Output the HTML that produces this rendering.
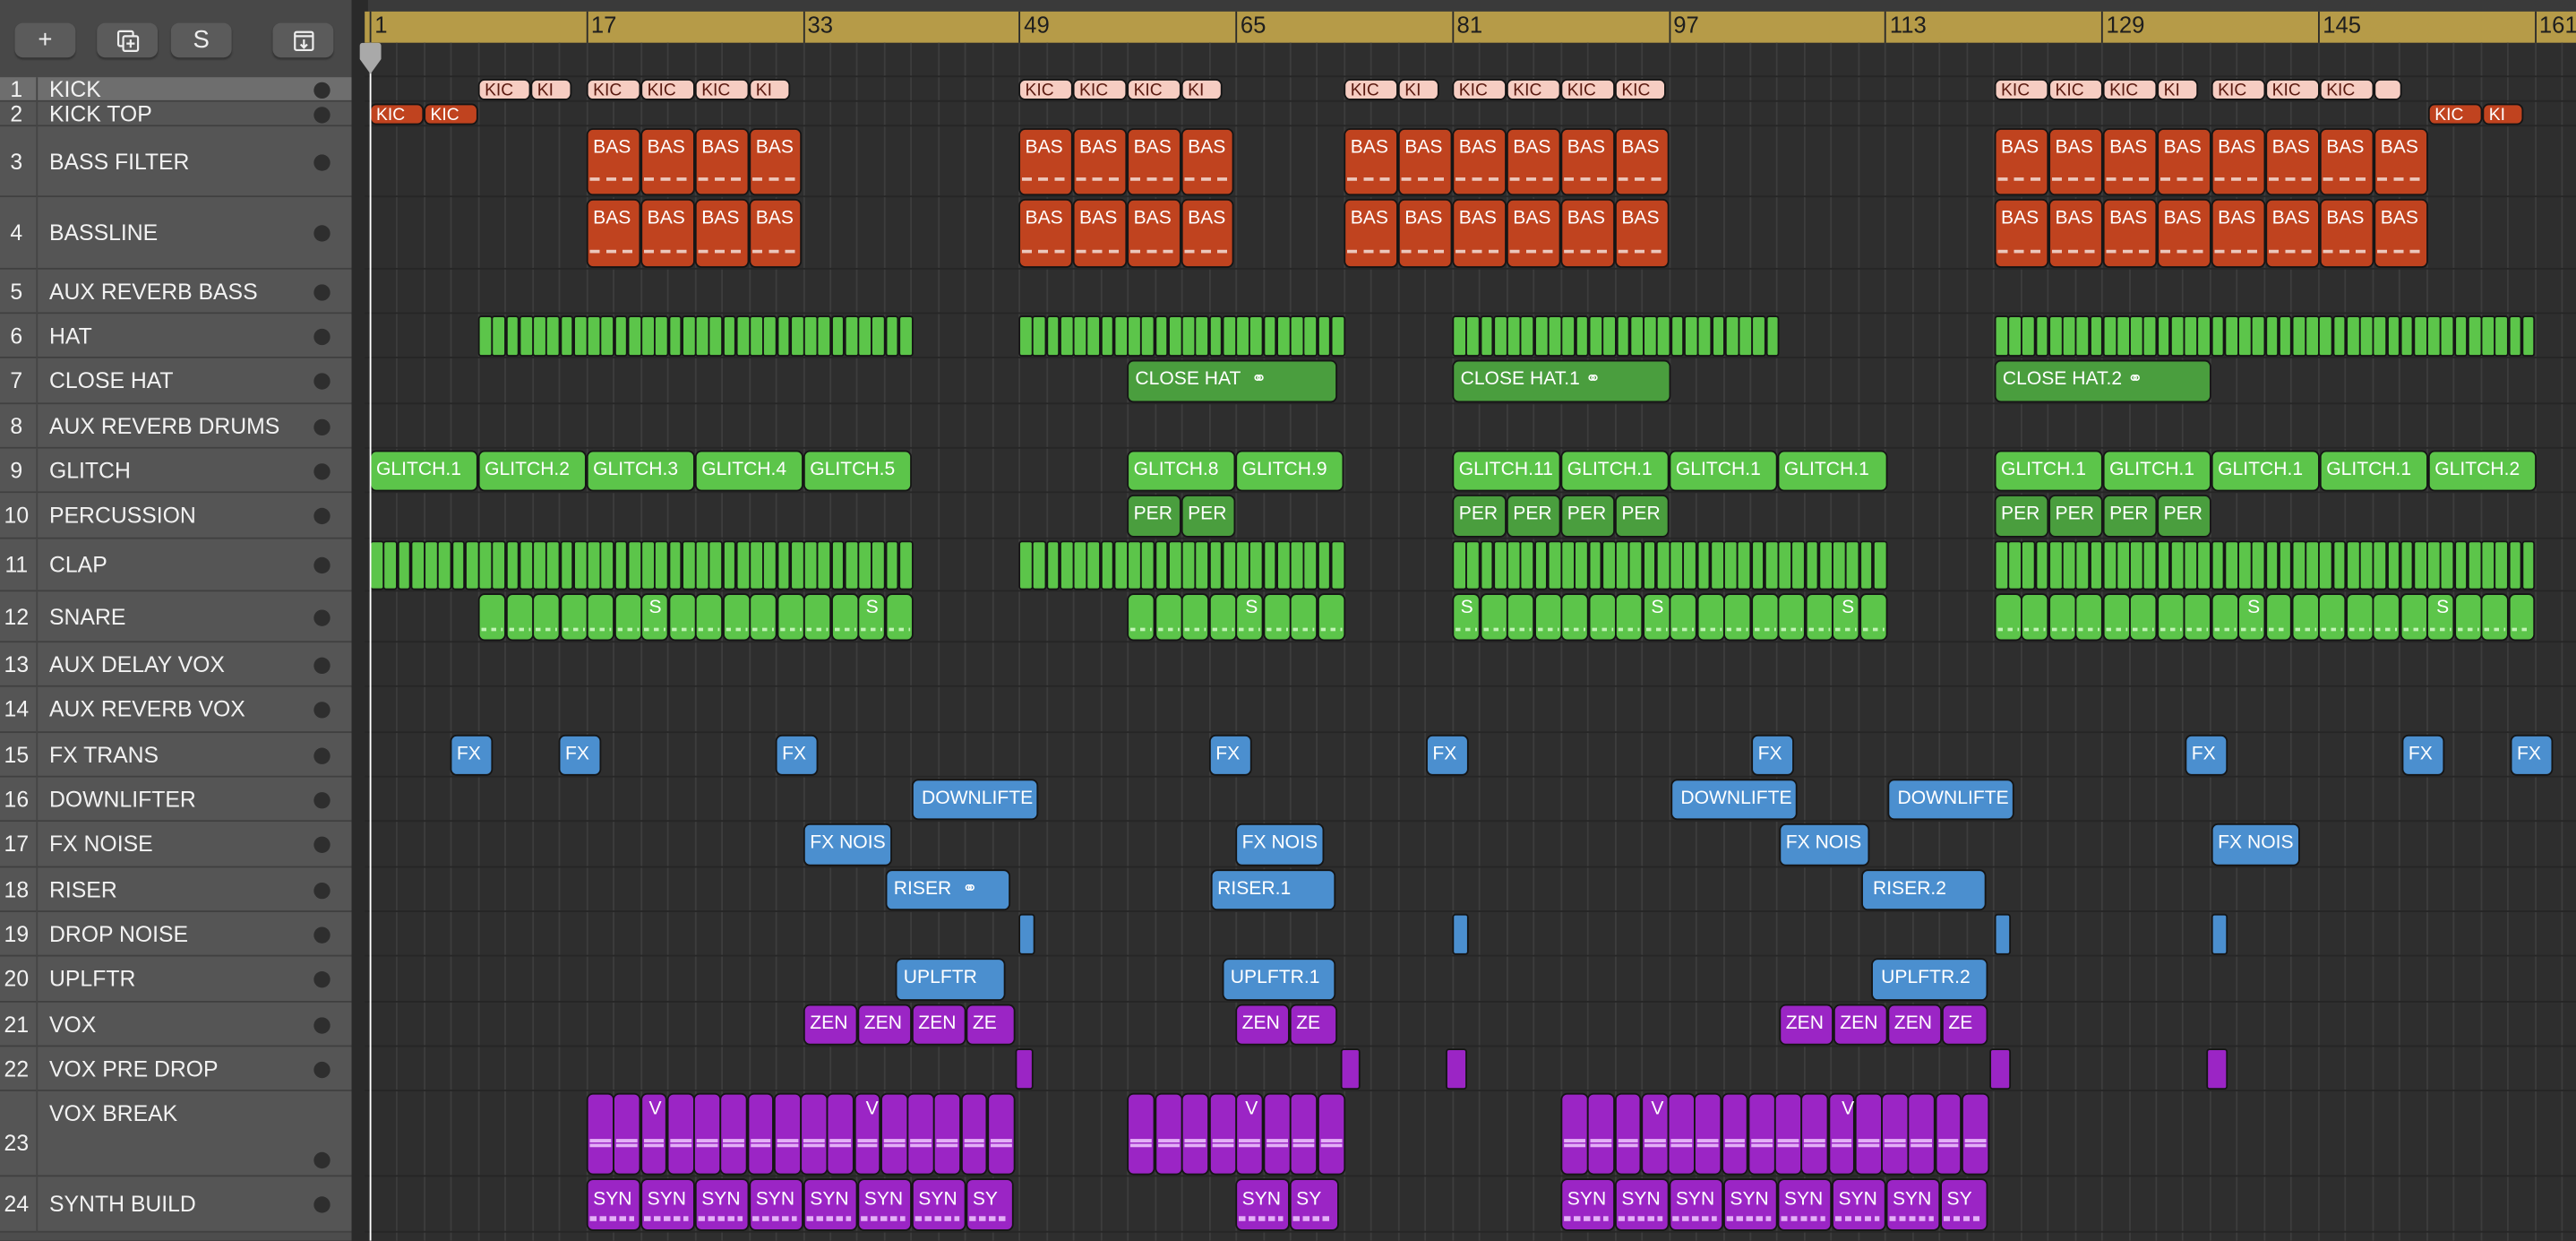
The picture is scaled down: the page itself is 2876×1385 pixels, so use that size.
<!DOCTYPE html>
<html><head><meta charset="utf-8"><style>
html,body{margin:0;padding:0;background:#2e2e2e;overflow:hidden;width:2876px;height:1384px}
#s{position:absolute;left:0;top:0;width:1568px;height:755px;transform:scale(1.83418);transform-origin:0 0;background:#2e2e2e;font-family:"Liberation Sans",sans-serif;overflow:hidden}
.a{position:absolute}
#lp{left:0;top:0;width:214px;height:755px;background:#4d4d4d}
.btn{position:absolute;top:14px;height:21px;width:37px;background:#5b5b5b;border-radius:5px;box-shadow:0 1px 1px #333;color:#eee;text-align:center;font-size:15px;line-height:21px}
.tr{position:absolute;left:0;width:214px;background:#555;border-bottom:1px solid #404040;box-sizing:border-box;color:#f2f2f2;font-size:13.5px}
.tr .n{position:absolute;left:0;width:20px;text-align:center}
.tr .t{position:absolute;left:30px}
.tr .d{position:absolute;left:191px;width:10px;height:10px;border-radius:50%;background:#2e2e2e}
.c{position:absolute;top:1px;bottom:1px;border:1px solid #151515;border-radius:4px;box-sizing:border-box;color:#fff;font-size:11.5px;padding-left:3px;white-space:nowrap;overflow:hidden}
.k{background:#f6cdc2;color:#5a1a10}
.r{background:#c0431f}
.g{background:#5cc54a}
.dg{background:#4a9e3e}
.b{background:#4b8fcf}
.p{background:#9b25c5}
.m::after{content:"";position:absolute;left:1px;right:2px;bottom:8px;height:2px;background:repeating-linear-gradient(90deg,rgba(255,255,255,.7) 0 6px,transparent 6px 10px)}
.m2::after{content:"";position:absolute;left:1px;right:1px;bottom:16px;height:5px;background:linear-gradient(rgba(240,200,255,.85) 0 2px,transparent 2px 3px,rgba(240,200,255,.85) 3px 5px)}
.m3::after{content:"";position:absolute;left:1px;right:1px;bottom:5px;height:2px;background:repeating-linear-gradient(90deg,rgba(220,255,210,.8) 0 3px,transparent 3px 6px)}
.m4::after{content:"";position:absolute;left:1px;right:3px;bottom:5px;height:3px;background:repeating-linear-gradient(90deg,rgba(240,200,255,.85) 0 4px,transparent 4px 6px)}
</style></head><body><div id="s">
<div class="a" style="left:0;top:0;width:1568px;height:7px;background:#3a3a3a"></div>
<div class="a" style="left:214px;top:0;width:10px;height:755px;background:#2a2a2a"></div>
<div class="a" id="ruler" style="left:222px;top:7px;width:1346px;height:19px;background:#b69b48;font-size:14px;color:#1e1e1e"></div>
<div id="grid"></div>
<div id="lp">
<div class="a" style="left:0;top:0;width:214px;height:47px;background:#484848"></div>
<div class="btn" style="left:9px">+</div>
<div class="btn" style="left:59px"><svg width="14" height="14" viewBox="0 0 14 14" style="margin-top:4px" fill="none" stroke="#eee" stroke-width="1.2"><rect x="1" y="1" width="9" height="9" rx="1"/><rect x="4" y="4" width="9" height="9" rx="1" fill="#5b5b5b"/><path d="M8.5 6v5M6 8.5h5"/></svg></div>
<div class="btn" style="left:104px">S</div>
<div class="btn" style="left:166px"><svg width="14" height="14" viewBox="0 0 14 14" style="margin-top:4px" fill="none" stroke="#eee" stroke-width="1.2"><rect x="1.5" y="1.5" width="11" height="11" rx="1"/><path d="M1.5 4h11M7 6v5M5 9l2 2 2-2"/></svg></div>
<div id="tracks"></div>
</div>
<script>
var tops=[47,62,77,120,164,191,218,246,273,300,328,360,391,418,446,473,500,528,555,582,610,637,664,716,750];
var names=["KICK","KICK TOP","BASS FILTER","BASSLINE","AUX REVERB BASS","HAT","CLOSE HAT","AUX REVERB DRUMS","GLITCH","PERCUSSION","CLAP","SNARE","AUX DELAY VOX","AUX REVERB VOX","FX TRANS","DOWNLIFTER","FX NOISE","RISER","DROP NOISE","UPLFTR","VOX","VOX PRE DROP","VOX BREAK","SYNTH BUILD"];
var g=document.getElementById('grid'),h='';
for(var x=225;x<1568;x+=16.47){h+='<div class="a" style="left:'+x+'px;top:26px;width:1px;height:729px;background:#3d3d3d"></div>';}
for(var i=0;i<25;i++){h+='<div class="a" style="left:222px;top:'+(tops[i]-1)+'px;width:1346px;height:1px;background:#262626"></div>';}
h+='<div class="a" style="left:225px;top:26px;width:1px;height:729px;background:#fff;z-index:5"></div>';
h+='<svg class="a" style="left:218px;top:26px;z-index:6" width="15" height="20"><path d="M1 2Q1 0 3 0H12Q14 0 14 2V10L7.5 19L1 10Z" fill="#a9a9a9"/></svg>';
g.innerHTML=h;
var r=document.getElementById('ruler'),rh='';
[1,17,33,49,65,81,97,113,129,145,161].forEach(function(b){var x=3+(b-1)*8.235;rh+='<div class="a" style="left:'+x+'px;top:0;height:19px;border-left:1px solid #2a2a2a;padding-left:2px;line-height:17px">'+b+'</div>';});
r.innerHTML=rh;
var tt='';
for(var i=0;i<24;i++){var t=tops[i],hh=tops[i+1]-t,cy=hh/2;var sel=i==0;
var ly=(i==22)?6:cy-8;
tt+='<div class="tr" style="top:'+t+'px;height:'+hh+'px;'+(sel?'background:#6e6e6e':'')+'"><span class="n" style="top:'+(i==22?cy-2:cy-8)+'px">'+(i+1)+'</span><span class="a" style="left:22px;top:0;width:1px;height:'+hh+'px;background:#444"></span><span class="t" style="top:'+ly+'px">'+names[i]+'</span><span class="d" style="top:'+(i==22?hh-15:cy-5)+'px"></span></div>';}
document.getElementById('tracks').innerHTML=tt;
function seg(row,cls,ranges,n,rad){var t=tops[row-1],hh=tops[row]-t,s='';
ranges.forEach(function(rg){var w=(rg[1]-rg[0])/Math.round((rg[1]-rg[0])/n);for(var x=rg[0];x<rg[1]-2;x+=w){s+='<div class="c '+cls+'" style="left:'+x+'px;top:'+(t+1)+'px;height:'+(hh-2)+'px;width:'+(w+0.5)+'px;border-radius:'+rad+'px"></div>';}});
var d=document.createElement('div');d.innerHTML=s;document.getElementById('s').appendChild(d);}
seg(6,'g',[[291,555],[620,818],[884,1083],[1214,1543]],8.24,2);
seg(11,'g',[[225,555],[620,818],[884,1148],[1214,1543]],8.24,2);
seg(12,'g m3',[[291,555],[686,818],[884,1148],[1214,1543]],16.47,4);
seg(23,'p m2',[[357,617],[686,818],[950,1210]],16.47,4);
seg(19,'b',[[620,629],[884,893],[1214,1223],[1346,1355]],9,2);
seg(22,'p',[[618,628],[816,827],[880,892],[1211,1223],[1343,1355]],11,2);
</script>
<div class="a" style="left:0;top:47px;height:15px;width:1568px">
<div class="c k" style="left:291px;width:32px;font-size:10.5px;line-height:12px">KIC</div><div class="c k" style="left:323px;width:25px;font-size:10.5px;line-height:12px">KI</div>
<div class="c k" style="left:357px;width:33px;font-size:10.5px;line-height:12px">KIC</div><div class="c k" style="left:390px;width:33px;font-size:10.5px;line-height:12px">KIC</div><div class="c k" style="left:423px;width:33px;font-size:10.5px;line-height:12px">KIC</div><div class="c k" style="left:456px;width:25px;font-size:10.5px;line-height:12px">KI</div>
<div class="c k" style="left:620px;width:33px;font-size:10.5px;line-height:12px">KIC</div><div class="c k" style="left:653px;width:33px;font-size:10.5px;line-height:12px">KIC</div><div class="c k" style="left:686px;width:33px;font-size:10.5px;line-height:12px">KIC</div><div class="c k" style="left:719px;width:25px;font-size:10.5px;line-height:12px">KI</div>
<div class="c k" style="left:818px;width:33px;font-size:10.5px;line-height:12px">KIC</div><div class="c k" style="left:851px;width:25px;font-size:10.5px;line-height:12px">KI</div>
<div class="c k" style="left:884px;width:33px;font-size:10.5px;line-height:12px">KIC</div><div class="c k" style="left:917px;width:33px;font-size:10.5px;line-height:12px">KIC</div><div class="c k" style="left:950px;width:33px;font-size:10.5px;line-height:12px">KIC</div><div class="c k" style="left:983px;width:31px;font-size:10.5px;line-height:12px">KIC</div>
<div class="c k" style="left:1214px;width:33px;font-size:10.5px;line-height:12px">KIC</div><div class="c k" style="left:1247px;width:33px;font-size:10.5px;line-height:12px">KIC</div><div class="c k" style="left:1280px;width:33px;font-size:10.5px;line-height:12px">KIC</div><div class="c k" style="left:1313px;width:25px;font-size:10.5px;line-height:12px">KI</div>
<div class="c k" style="left:1346px;width:33px;font-size:10.5px;line-height:12px">KIC</div><div class="c k" style="left:1379px;width:33px;font-size:10.5px;line-height:12px">KIC</div><div class="c k" style="left:1412px;width:33px;font-size:10.5px;line-height:12px">KIC</div><div class="c k" style="left:1445px;width:17px"></div>
</div>
<div class="a" style="left:0;top:62px;height:15px;width:1568px">
<div class="c r" style="left:225px;width:33px;font-size:10.5px;line-height:12px">KIC</div><div class="c r" style="left:258px;width:33px;font-size:10.5px;line-height:12px">KIC</div>
<div class="c r" style="left:1478px;width:33px;font-size:10.5px;line-height:12px">KIC</div><div class="c r" style="left:1511px;width:25px;font-size:10.5px;line-height:12px">KI</div>
</div>
<div class="a" style="left:0;top:77px;height:43px;width:1568px;line-height:22px">
<div class="c r m" style="left:357px;width:33px">BAS</div><div class="c r m" style="left:390px;width:33px">BAS</div><div class="c r m" style="left:423px;width:33px">BAS</div><div class="c r m" style="left:456px;width:32px">BAS</div>
<div class="c r m" style="left:620px;width:33px">BAS</div><div class="c r m" style="left:653px;width:33px">BAS</div><div class="c r m" style="left:686px;width:33px">BAS</div><div class="c r m" style="left:719px;width:32px">BAS</div>
<div class="c r m" style="left:818px;width:33px">BAS</div><div class="c r m" style="left:851px;width:33px">BAS</div><div class="c r m" style="left:884px;width:33px">BAS</div><div class="c r m" style="left:917px;width:33px">BAS</div><div class="c r m" style="left:950px;width:33px">BAS</div><div class="c r m" style="left:983px;width:33px">BAS</div>
<div class="c r m" style="left:1214px;width:33px">BAS</div><div class="c r m" style="left:1247px;width:33px">BAS</div><div class="c r m" style="left:1280px;width:33px">BAS</div><div class="c r m" style="left:1313px;width:33px">BAS</div><div class="c r m" style="left:1346px;width:33px">BAS</div><div class="c r m" style="left:1379px;width:33px">BAS</div><div class="c r m" style="left:1412px;width:33px">BAS</div><div class="c r m" style="left:1445px;width:33px">BAS</div>
</div>
<div class="a" style="left:0;top:120px;height:44px;width:1568px;line-height:22px">
<div class="c r m" style="left:357px;width:33px">BAS</div><div class="c r m" style="left:390px;width:33px">BAS</div><div class="c r m" style="left:423px;width:33px">BAS</div><div class="c r m" style="left:456px;width:32px">BAS</div>
<div class="c r m" style="left:620px;width:33px">BAS</div><div class="c r m" style="left:653px;width:33px">BAS</div><div class="c r m" style="left:686px;width:33px">BAS</div><div class="c r m" style="left:719px;width:32px">BAS</div>
<div class="c r m" style="left:818px;width:33px">BAS</div><div class="c r m" style="left:851px;width:33px">BAS</div><div class="c r m" style="left:884px;width:33px">BAS</div><div class="c r m" style="left:917px;width:33px">BAS</div><div class="c r m" style="left:950px;width:33px">BAS</div><div class="c r m" style="left:983px;width:33px">BAS</div>
<div class="c r m" style="left:1214px;width:33px">BAS</div><div class="c r m" style="left:1247px;width:33px">BAS</div><div class="c r m" style="left:1280px;width:33px">BAS</div><div class="c r m" style="left:1313px;width:33px">BAS</div><div class="c r m" style="left:1346px;width:33px">BAS</div><div class="c r m" style="left:1379px;width:33px">BAS</div><div class="c r m" style="left:1412px;width:33px">BAS</div><div class="c r m" style="left:1445px;width:33px">BAS</div>
</div>
<div class="a" style="left:0;top:218px;height:28px;width:1568px;line-height:22px">
<div class="c dg" style="left:686px;width:128px;padding-left:4px">CLOSE HAT &nbsp;⚭</div>
<div class="c dg" style="left:884px;width:133px;padding-left:4px">CLOSE HAT.1 ⚭</div>
<div class="c dg" style="left:1214px;width:132px;padding-left:4px">CLOSE HAT.2 ⚭</div>
</div>
<div class="a" style="left:0;top:273px;height:27px;width:1568px;line-height:22px">
<div class="c g" style="left:225px;width:66px">GLITCH.1</div><div class="c g" style="left:291px;width:66px">GLITCH.2</div><div class="c g" style="left:357px;width:66px">GLITCH.3</div><div class="c g" style="left:423px;width:66px">GLITCH.4</div><div class="c g" style="left:489px;width:66px">GLITCH.5</div>
<div class="c g" style="left:686px;width:66px">GLITCH.8</div><div class="c g" style="left:752px;width:66px">GLITCH.9</div>
<div class="c g" style="left:884px;width:66px">GLITCH.11</div><div class="c g" style="left:950px;width:66px">GLITCH.1</div><div class="c g" style="left:1016px;width:66px">GLITCH.1</div><div class="c g" style="left:1082px;width:67px">GLITCH.1</div>
<div class="c g" style="left:1214px;width:66px">GLITCH.1</div><div class="c g" style="left:1280px;width:66px">GLITCH.1</div><div class="c g" style="left:1346px;width:66px">GLITCH.1</div><div class="c g" style="left:1412px;width:66px">GLITCH.1</div><div class="c g" style="left:1478px;width:66px">GLITCH.2</div>
</div>
<div class="a" style="left:0;top:300px;height:28px;width:1568px;line-height:22px">
<div class="c dg" style="left:686px;width:33px">PER</div><div class="c dg" style="left:719px;width:33px">PER</div>
<div class="c dg" style="left:884px;width:33px">PER</div><div class="c dg" style="left:917px;width:33px">PER</div><div class="c dg" style="left:950px;width:33px">PER</div><div class="c dg" style="left:983px;width:33px">PER</div>
<div class="c dg" style="left:1214px;width:33px">PER</div><div class="c dg" style="left:1247px;width:33px">PER</div><div class="c dg" style="left:1280px;width:33px">PER</div><div class="c dg" style="left:1313px;width:33px">PER</div>
</div>
<div class="a" style="left:0;top:360px;height:31px;width:1568px;line-height:20px;z-index:3;pointer-events:none">
<span class="a" style="left:395px;color:#fff;font-size:11.5px">S</span><span class="a" style="left:527px;color:#fff;font-size:11.5px">S</span><span class="a" style="left:758px;color:#fff;font-size:11.5px">S</span><span class="a" style="left:889px;color:#fff;font-size:11.5px">S</span><span class="a" style="left:1005px;color:#fff;font-size:11.5px">S</span><span class="a" style="left:1121px;color:#fff;font-size:11.5px">S</span><span class="a" style="left:1368px;color:#fff;font-size:11.5px">S</span><span class="a" style="left:1483px;color:#fff;font-size:11.5px">S</span>
</div>
<div class="a" style="left:0;top:446px;height:27px;width:1568px;line-height:22px">
<div class="c b" style="left:274px;width:26px">FX</div><div class="c b" style="left:340px;width:26px">FX</div><div class="c b" style="left:472px;width:26px">FX</div><div class="c b" style="left:736px;width:26px">FX</div><div class="c b" style="left:868px;width:26px">FX</div><div class="c b" style="left:1066px;width:26px">FX</div><div class="c b" style="left:1330px;width:26px">FX</div><div class="c b" style="left:1462px;width:26px">FX</div><div class="c b" style="left:1528px;width:26px">FX</div>
</div>
<div class="a" style="left:0;top:473px;height:27px;width:1568px;line-height:22px">
<div class="c b" style="left:555px;width:77px;padding-left:5px">DOWNLIFTE</div><div class="c b" style="left:1017px;width:77px;padding-left:5px">DOWNLIFTE</div><div class="c b" style="left:1149px;width:77px;padding-left:5px">DOWNLIFTE</div>
</div>
<div class="a" style="left:0;top:500px;height:28px;width:1568px;line-height:22px">
<div class="c b" style="left:489px;width:54px">FX NOIS</div><div class="c b" style="left:752px;width:54px">FX NOIS</div><div class="c b" style="left:1083px;width:55px">FX NOIS</div><div class="c b" style="left:1346px;width:54px">FX NOIS</div>
</div>
<div class="a" style="left:0;top:528px;height:27px;width:1568px;line-height:22px">
<div class="c b" style="left:539px;width:76px;padding-left:4px">RISER &nbsp;⚭</div><div class="c b" style="left:737px;width:76px">RISER.1</div><div class="c b" style="left:1133px;width:76px;padding-left:6px">RISER.2</div>
</div>
<div class="a" style="left:0;top:582px;height:28px;width:1568px;line-height:22px">
<div class="c b" style="left:545px;width:67px;padding-left:4px">UPLFTR</div><div class="c b" style="left:744px;width:69px;padding-left:4px">UPLFTR.1</div><div class="c b" style="left:1139px;width:71px;padding-left:5px">UPLFTR.2</div>
</div>
<div class="a" style="left:0;top:610px;height:27px;width:1568px;line-height:22px">
<div class="c p" style="left:489px;width:33px">ZEN</div><div class="c p" style="left:522px;width:33px">ZEN</div><div class="c p" style="left:555px;width:33px">ZEN</div><div class="c p" style="left:588px;width:30px">ZE</div>
<div class="c p" style="left:752px;width:33px">ZEN</div><div class="c p" style="left:785px;width:29px">ZE</div>
<div class="c p" style="left:1083px;width:33px">ZEN</div><div class="c p" style="left:1116px;width:33px">ZEN</div><div class="c p" style="left:1149px;width:33px">ZEN</div><div class="c p" style="left:1182px;width:28px">ZE</div>
</div>
<div class="a" style="left:0;top:664px;height:52px;width:1568px;line-height:22px;z-index:3">
<span class="a" style="left:395px;color:#fff;font-size:11.5px">V</span><span class="a" style="left:527px;color:#fff;font-size:11.5px">V</span><span class="a" style="left:758px;color:#fff;font-size:11.5px">V</span><span class="a" style="left:1005px;color:#fff;font-size:11.5px">V</span><span class="a" style="left:1121px;color:#fff;font-size:11.5px">V</span>
</div>
<div class="a" style="left:0;top:716px;height:34px;width:1568px;line-height:24px">
<div class="c p m4" style="left:357px;width:33px">SYN</div><div class="c p m4" style="left:390px;width:33px">SYN</div><div class="c p m4" style="left:423px;width:33px">SYN</div><div class="c p m4" style="left:456px;width:33px">SYN</div><div class="c p m4" style="left:489px;width:33px">SYN</div><div class="c p m4" style="left:522px;width:33px">SYN</div><div class="c p m4" style="left:555px;width:33px">SYN</div><div class="c p m4" style="left:588px;width:29px">SY</div>
<div class="c p m4" style="left:752px;width:33px">SYN</div><div class="c p m4" style="left:785px;width:30px">SY</div>
<div class="c p m4" style="left:950px;width:33px">SYN</div><div class="c p m4" style="left:983px;width:33px">SYN</div><div class="c p m4" style="left:1016px;width:33px">SYN</div><div class="c p m4" style="left:1049px;width:33px">SYN</div><div class="c p m4" style="left:1082px;width:33px">SYN</div><div class="c p m4" style="left:1115px;width:33px">SYN</div><div class="c p m4" style="left:1148px;width:33px">SYN</div><div class="c p m4" style="left:1181px;width:29px">SY</div>
</div>
</div></body></html>
